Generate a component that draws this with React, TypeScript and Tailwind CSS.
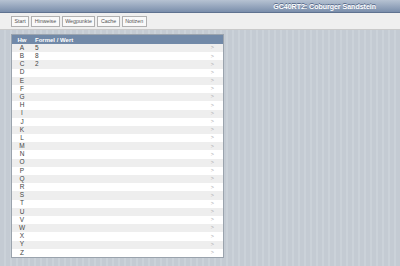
import React from "react";

const letters = "ABCDEFGHIJKLMNOPQRSTUVWXYZ".split("");
const values: Record<string, string> = { A: "5", B: "8", C: "2" };
const tabs = ["Start", "Hinweise", "Wegpunkte", "Cache", "Notizen"];

export default function App() {
  return (
    <div
      className="w-[400px] h-[266px] overflow-hidden flex flex-col bg-[repeating-linear-gradient(90deg,#c4cbd3_0px,#c4cbd3_4px,#cbd2d9_4px,#cbd2d9_6px)]"
      style={{ fontFamily: '"Liberation Sans", Arial, sans-serif' }}
    >
      <div className="h-[13px] flex items-center justify-end pr-[24px] bg-[linear-gradient(#b6c2d2,#7a8eab)] border-b border-[#5f7290]">
        <span className="text-[7px] font-bold text-white leading-none [text-shadow:0_-1px_0_#56698a]">
          GC40RT2: Coburger Sandstein
        </span>
      </div>
      <div className="h-[17px] bg-[#efefef] border-b border-[#c9c9c9] flex items-end pb-[2px] pl-[11px] gap-[2px]">
        {tabs.map((t) => (
          <div
            key={t}
            className="h-[11px] px-[2.5px] flex items-center border border-[#b0b0b0] bg-[#f9f9f9] text-[5.3px] leading-none text-[#555]"
          >
            {t}
          </div>
        ))}
      </div>
      <div className="ml-[11px] mt-[4px] w-[213px] border border-[#9aa3ad] bg-white flex flex-col">
        <div className="h-[9px] bg-[#7189a8] flex items-center text-white text-[6px] font-bold leading-none">
          <div className="w-[20px] text-center">Hw</div>
          <div className="pl-[3px]">Formel / Wert</div>
        </div>
        {letters.map((l, i) => (
          <div
            key={l}
            className={`h-[8.2px] flex items-center text-[6.5px] leading-none text-[#444] ${
              i % 2 === 0 ? "bg-[#eeeeee]" : "bg-white"
            }`}
          >
            <div className="w-[20px] text-center">{l}</div>
            <div className="pl-[3px] flex-1">{values[l] ?? ""}</div>
            <div className="pr-[9px] text-[#aaaaaa] text-[5.5px]">&gt;</div>
          </div>
        ))}
      </div>
    </div>
  );
}
